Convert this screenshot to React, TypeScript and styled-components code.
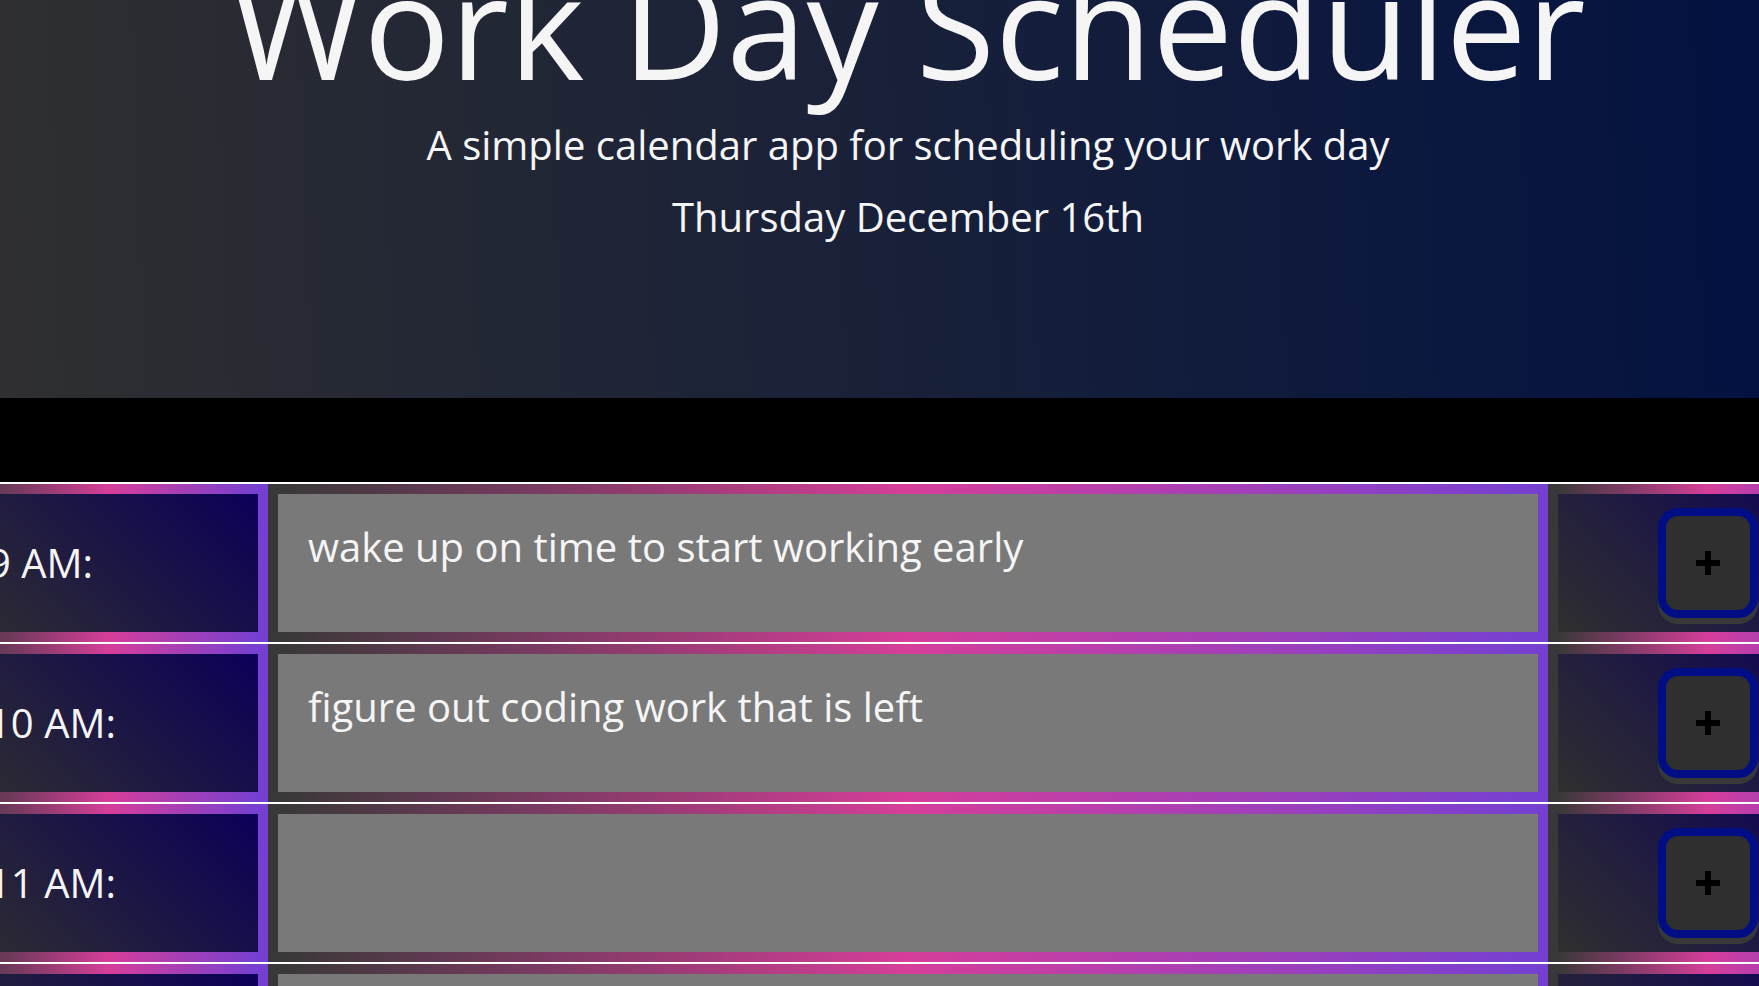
import React from "react";
import styled, { createGlobalStyle } from "styled-components";

const GlobalStyle = createGlobalStyle`
  *, *::before, *::after { box-sizing: border-box; }
  body {
    margin: 0;
    background: #000;
    color: #f5f5f5;
    font-family: "Open Sans", "Noto Sans", sans-serif;
    font-size: 40px;
    line-height: 60px;
  }
`;

const Viewport = styled.div`
  min-height: 100vh;
  overflow: hidden;
`;

/* The sheet runs past both edges of the window, as a zoomed-in page does. */
const Sheet = styled.div`
  margin: -62px -109px 0 -52px;
`;

const Header = styled.header`
  display: flex;
  flex-direction: column;
  align-items: center;
  padding-bottom: 139px;
  margin-bottom: 84px;
  text-align: center;
  background: linear-gradient(88deg, #303030, #001042);
`;

const Title = styled.h1`
  margin: 0 0 5px;
  font-size: 144px;
  line-height: 172px;
  font-weight: 400;
`;

const Lead = styled.p`
  margin: 0 0 12px;
`;

const Row = styled.section`
  display: grid;
  grid-template-columns: 2fr 8fr 2fr;
  height: 160px;
  border-top: 2px solid #fff;
`;

const Cell = styled.div<{ $center?: boolean }>`
  display: flex;
  align-items: center;
  justify-content: ${(p) => (p.$center ? "center" : "flex-start")};
  padding: 0 30px;
  border: 10px solid;
  border-image: linear-gradient(to right, #383838, #d63e9a, #7540d2) 1;
  background: linear-gradient(45deg, #2f2f2f, #0b0058);
`;

const HourLabel = styled.label``;

const Entry = styled.textarea`
  display: block;
  width: 100%;
  height: 100%;
  margin: 0;
  padding: 23px 30px;
  border: 10px solid;
  border-image: linear-gradient(to right, #383838, #d63e9a, #7540d2) 1;
  border-radius: 0;
  outline: none;
  resize: none;
  overflow: hidden;
  background: #797979;
  color: inherit;
  font: inherit;
`;

const SaveButton = styled.button`
  display: flex;
  align-items: center;
  justify-content: center;
  width: 100px;
  height: 110px;
  padding: 0;
  border: 8px solid #000d85;
  border-radius: 20px;
  background: #2f2f2f;
  box-shadow: 0 6px #383838;
  color: #000;
`;

const PlusIcon = () => (
  <svg width="24" height="24" viewBox="0 0 24 24" aria-hidden="true">
    <path d="M9 0h6v9h9v6h-9v9H9v-9H0V9h9z" fill="currentColor" />
  </svg>
);

const hours = [
  { id: "h9", label: "9 AM:", text: "wake up on time to start working early" },
  { id: "h10", label: "10 AM:", text: "figure out coding work that is left" },
  { id: "h11", label: "11 AM:", text: "" },
  { id: "h12", label: "12 PM:", text: "" },
];

export default function App() {
  return (
    <Viewport>
      <GlobalStyle />
      <Sheet>
        <Header>
          <Title>Work Day Scheduler</Title>
          <Lead>A simple calendar app for scheduling your work day</Lead>
          <Lead>Thursday December 16th</Lead>
        </Header>
        <main>
          {hours.map((hour) => (
            <Row key={hour.id}>
              <Cell>
                <HourLabel htmlFor={hour.id}>{hour.label}</HourLabel>
              </Cell>
              <Entry id={hour.id} defaultValue={hour.text} spellCheck={false} />
              <Cell $center>
                <SaveButton type="button" aria-label="Save">
                  <PlusIcon />
                </SaveButton>
              </Cell>
            </Row>
          ))}
        </main>
      </Sheet>
    </Viewport>
  );
}
